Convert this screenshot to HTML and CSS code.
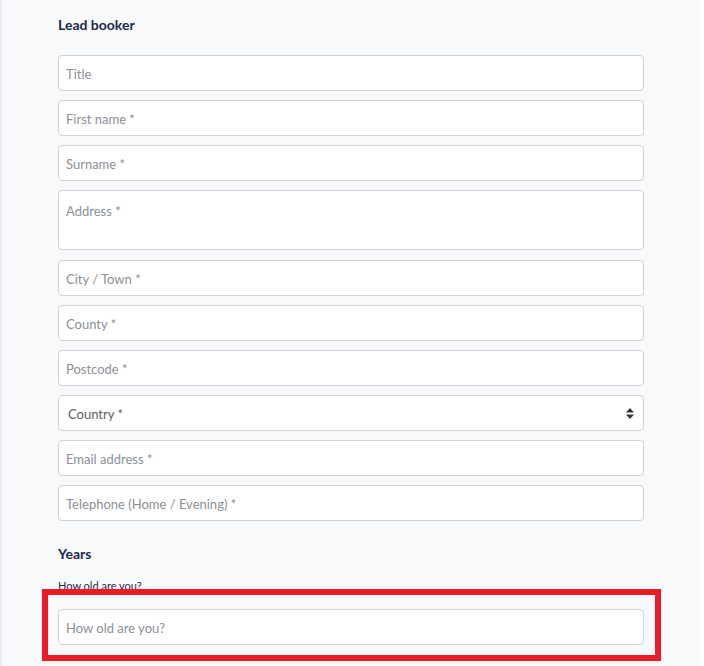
FILE: index.html
```html
<!DOCTYPE html>
<html lang="en">
<head>
  <meta charset="UTF-8" />
  <meta name="viewport" content="width=device-width, initial-scale=1.0"/>
  <title>Lead booker</title>
  <link rel="stylesheet" href="styles.css">
</head>
<body>

  <div class="panel">
    <h2>Lead booker</h2>

    <form class="booker-form">
      <input type="text" placeholder="Title">
      <input type="text" placeholder="First name *">
      <input type="text" placeholder="Surname *">
      <textarea placeholder="Address *"></textarea>
      <input type="text" placeholder="City / Town *">
      <input type="text" placeholder="County *">
      <input type="text" placeholder="Postcode *">

      <div class="select-wrap">
        <select>
          <option value="">Country *</option>
          <option value="uk">United Kingdom</option>
          <option value="ie">Ireland</option>
        </select>
        <svg class="select-arrow" width="8" height="11" viewBox="0 0 8 11">
          <path d="M4 0 L8 4.5 H0 Z" fill="#333"/>
          <path d="M4 11 L8 6.5 H0 Z" fill="#333"/>
        </svg>
      </div>

      <input type="email" placeholder="Email address *">
      <input type="tel" placeholder="Telephone (Home / Evening) *">

      <h2 class="section-title">Years</h2>
      <label class="small-label" for="age">How old are you?</label>
      <div class="highlight">
        <input type="text" id="age" placeholder="How old are you?">
      </div>
    </form>
  </div>

</body>
</html>
```

FILE: styles.css
```css
html, body {
  margin: 0;
  background-color: #ffffff;
}

body {
  font-family: Lato, 'Open Sans', sans-serif;
  height: 666px;
  overflow: hidden;
}

.panel {
  width: 700px;
  height: 666px;
  box-sizing: border-box;
  padding: 16px 0 0 56px;
  background-color: #f8f9fb;
  border-left: 2px solid #eceef1;
}

h2 {
  margin: 0 0 21px;
  font-size: 14px;
  line-height: 18px;
  font-weight: 700;
  color: #1b2a4a;
}

.booker-form {
  width: 586px;
  display: flex;
  flex-direction: column;
}

input,
textarea,
select {
  display: block;
  width: 100%;
  height: 36px;
  box-sizing: border-box;
  margin: 0 0 9px;
  padding: 2px 7px 0;
  font-family: inherit;
  font-size: 13px;
  color: #333;
  background-color: #ffffff;
  border: 1px solid #cfd2d6;
  border-radius: 4px;
  outline: none;
}

::placeholder {
  color: #8c9096;
  opacity: 1;
}

textarea {
  height: 60px;
  margin-bottom: 10px;
  padding-top: 12px;
  resize: none;
}

.select-wrap {
  position: relative;
}

select {
  appearance: none;
  -webkit-appearance: none;
  padding-left: 9px;
  color: #5b5e63;
}

.select-arrow {
  position: absolute;
  right: 10px;
  top: 13px;
}

.section-title {
  margin: 15px 0 15px;
}

.small-label {
  font-size: 11px;
  line-height: 15px;
  color: #1b2a4a;
  margin-bottom: 16px;
}

.highlight {
  position: relative;
}

.highlight::after {
  content: '';
  position: absolute;
  top: -20px;
  left: -16px;
  right: -17px;
  bottom: -7px;
  border: 6px solid #ed1c24;
  pointer-events: none;
}
```
